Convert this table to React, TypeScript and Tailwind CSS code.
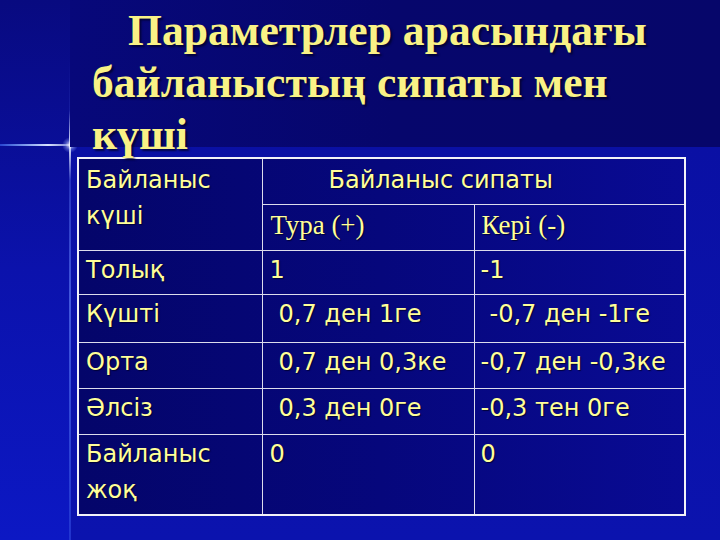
import React from "react";

const sans = "font-['DejaVu_Sans','Noto_Sans',sans-serif]";
const serif = "font-['Liberation_Serif','DejaVu_Serif',serif]";

type Row = { a: React.ReactNode; b: string; c: string; bIndent?: boolean; cIndent?: boolean; h: string };

const rows: Row[] = [
  { a: "Толық", b: "1", c: "-1", h: "h-[44px]" },
  { a: "Күшті", b: "0,7 ден 1ге", c: "-0,7 ден -1ге", bIndent: true, cIndent: true, h: "h-[48px]" },
  { a: "Орта", b: "0,7 ден 0,3ке", c: "-0,7 ден -0,3ке", bIndent: true, h: "h-[46px]" },
  { a: "Әлсіз", b: "0,3 ден 0ге", c: "-0,3 тен 0ге", bIndent: true, h: "h-[46px]" },
  {
    a: (
      <>
        Байланыс
        <br />
        жоқ
      </>
    ),
    b: "0",
    c: "0",
    h: "h-[81px]",
  },
];

const cell =
  "border border-[#dcdcec] align-top text-[24px] leading-[36px] text-[#ffff99] [text-shadow:1px_1px_1px_rgba(0,0,40,0.8)] " +
  sans;

export default function App() {
  return (
    <div className="relative w-[720px] h-[540px] overflow-hidden flex bg-[#0a11a6]">
      {/* left strip */}
      <div className="w-[70px] h-full bg-gradient-to-b from-[#080a80] via-[#0b12ac] to-[#0c18c4]" />

      {/* main column */}
      <div className="flex-1 flex flex-col">
        <div className="h-[147px] bg-gradient-to-r from-[#07087a] via-[#06066c] to-[#06066a] pl-[22px] pt-[4px] relative z-30">
          <h1
            className={
              "text-[43.6px] leading-[52px] font-bold text-[#f9f286] indent-[36px] whitespace-nowrap [text-shadow:2px_2px_2px_rgba(0,0,30,0.7)] " +
              serif
            }
          >
            Параметрлер арасындағы
            <br />
            <span className="-ml-[36px] inline-block">байланыстың сипаты мен</span>
            <br />
            <span className="-ml-[36px] inline-block">күші</span>
          </h1>
        </div>

        <div className="flex-1 bg-gradient-to-b from-[#0a10a4] to-[#0b13ae] pl-[7px] pt-[10px] relative z-10">
          <table className="table-fixed border-collapse border-2 border-[#f2f2f8] w-[607px] bg-gradient-to-r from-[#04056a] via-[#06077c] to-[#090b94]">
            <colgroup>
              <col className="w-[184px]" />
              <col className="w-[212px]" />
              <col className="w-[211px]" />
            </colgroup>
            <tbody>
              <tr className="h-[46px]">
                <td rowSpan={2} className={cell + " pl-[7px] pt-[3px] leading-[35px]"}>
                  Байланыс
                  <br />
                  күші
                </td>
                <td colSpan={2} className={cell + " pl-[66px] pt-[3px]"}>
                  Байланыс сипаты
                </td>
              </tr>
              <tr className="h-[46px]">
                <td className={cell + " pl-[8px] pt-[2px] text-[27px] " + serif}>Тура (+)</td>
                <td className={cell + " pl-[7px] pt-[2px] text-[27px] " + serif}>Кері (-)</td>
              </tr>
              {rows.map((r, i) => (
                <tr key={i} className={r.h}>
                  <td className={cell + " pl-[7px] pt-[1px]"}>{r.a}</td>
                  <td className={cell + " pt-[1px] " + (r.bIndent ? "pl-[16px]" : "pl-[7px]")}>{r.b}</td>
                  <td className={cell + " pt-[1px] " + (r.cIndent ? "pl-[15px]" : "pl-[6px]")}>{r.c}</td>
                </tr>
              ))}
            </tbody>
          </table>
        </div>
      </div>

      {/* decorative cross lines */}
      <div className="absolute left-[69px] top-[60px] bottom-0 w-[2px] bg-gradient-to-b from-transparent via-[#5a74f0] to-[#2a40d8] opacity-70 z-20" />
      <div className="absolute left-[69px] top-[110px] h-[70px] w-[2px] bg-gradient-to-b from-transparent via-[#e8eeff] to-transparent z-20" />
      <div className="absolute left-0 top-[144px] w-[96px] h-[2px] bg-gradient-to-r from-[#2a44d0] via-[#d8e2ff] to-transparent z-20" />
      <div className="absolute left-[62px] top-[137px] w-[16px] h-[16px] rounded-full bg-[radial-gradient(circle,rgba(255,255,255,0.9)_0%,rgba(160,180,255,0.4)_40%,transparent_70%)] z-20" />
    </div>
  );
}
